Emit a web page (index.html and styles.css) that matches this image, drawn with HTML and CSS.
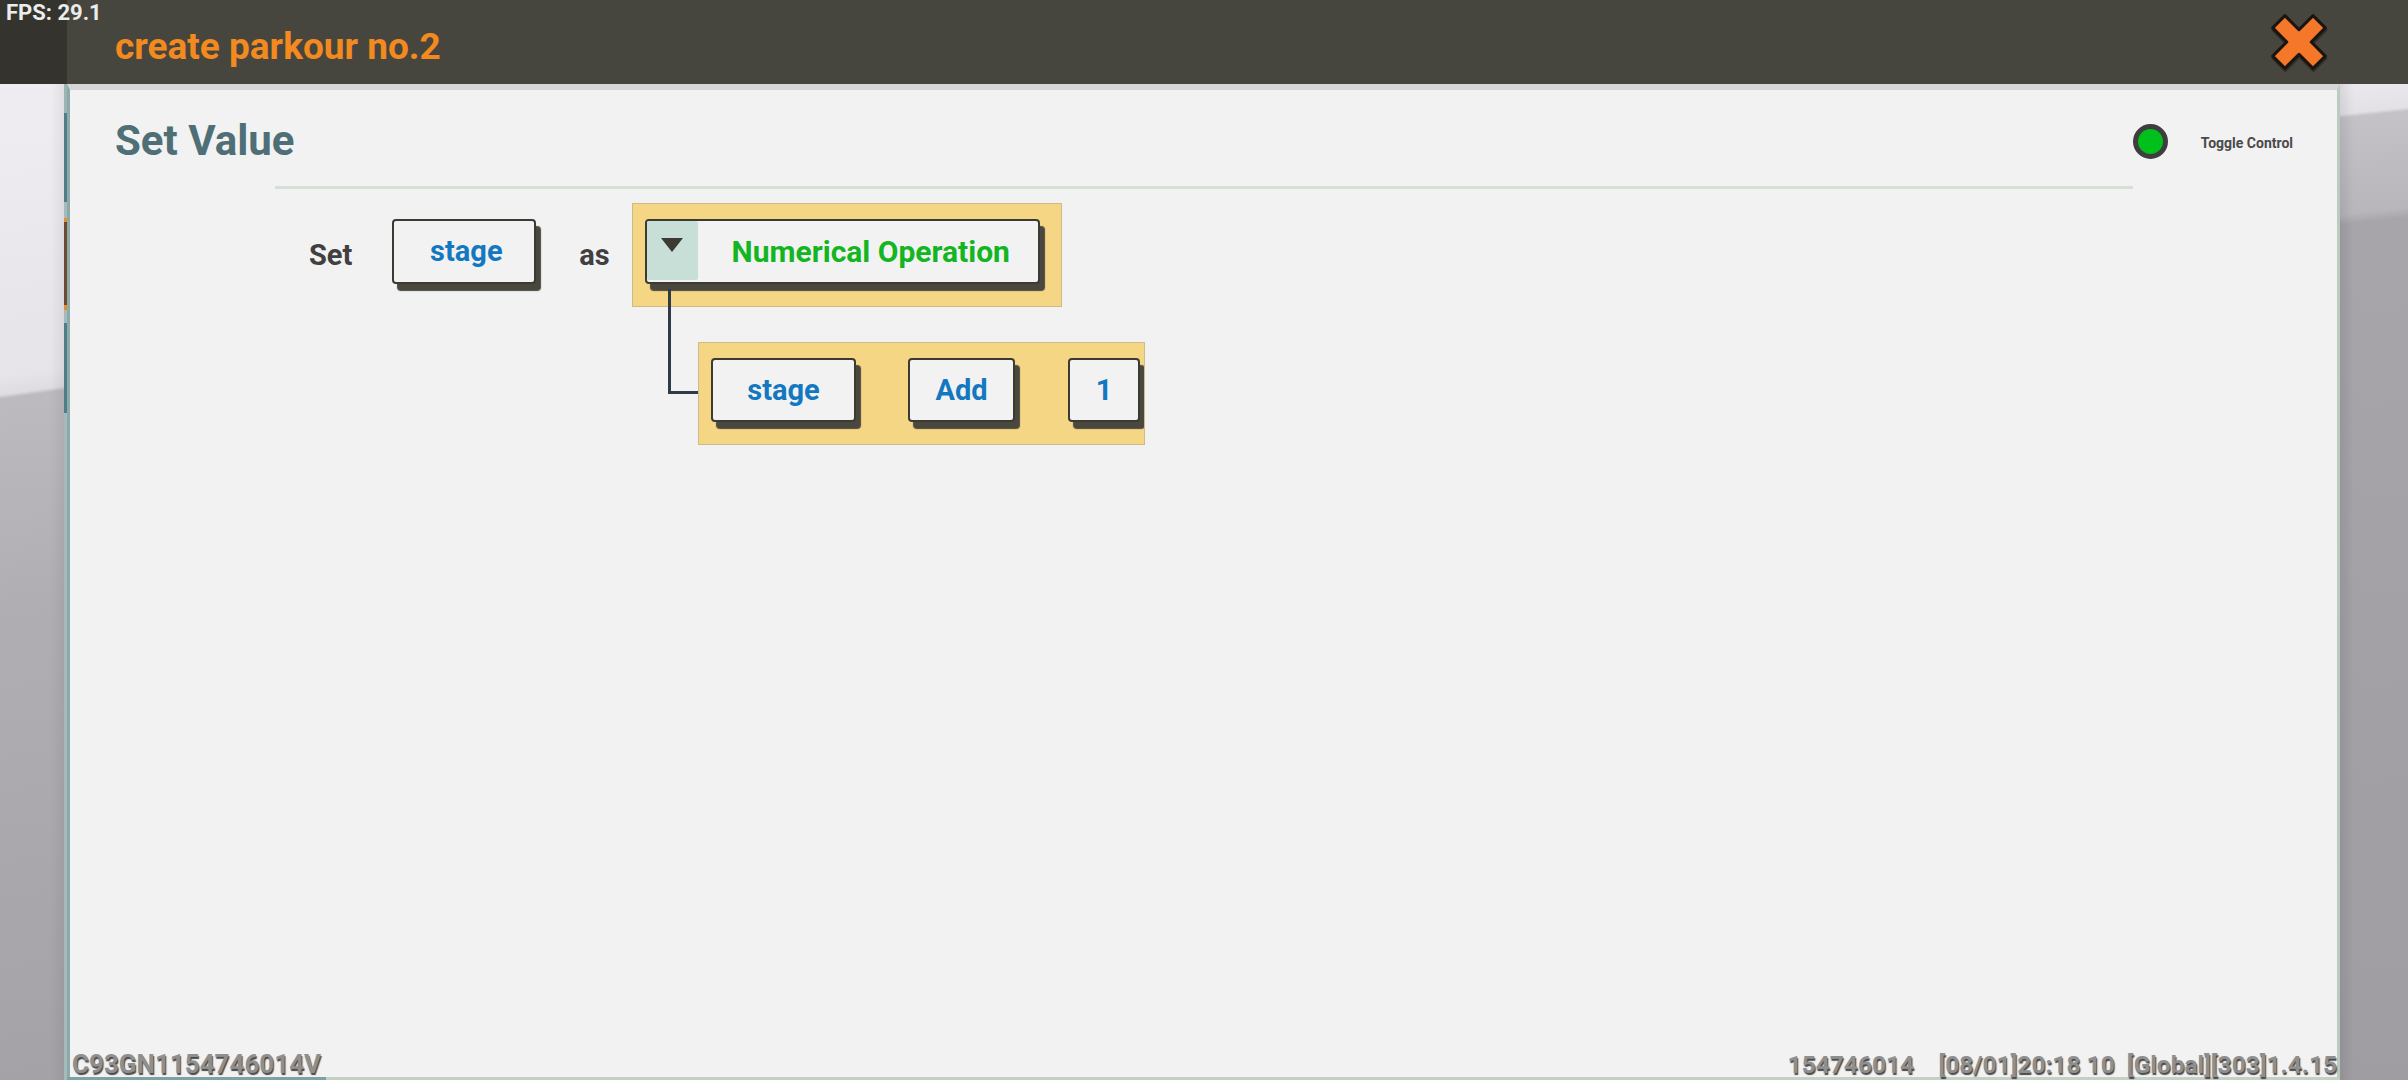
FILE: index.html
```html
<!DOCTYPE html>
<html lang="en">
<head>
<meta charset="utf-8">
<title>create parkour no.2</title>
<link rel="stylesheet" href="styles.css">
</head>
<body>
<div class="screen">
  <div class="fps">FPS: 29.1</div>
  <header class="topbar">
    <h1 class="title">create parkour no.2</h1>
    <button class="close" aria-label="Close">
      <svg viewBox="0 0 100 100" width="62" height="62">
        <g transform="rotate(45 50 50)">
          <polygon class="x-shadow" transform="translate(3 2)" points="64,4 64,36 96,36 96,64 64,64 64,96 36,96 36,64 4,64 4,36 36,36 36,4"/>
          <polygon class="x-shape" points="64,4 64,36 96,36 96,64 64,64 64,96 36,96 36,64 4,64 4,36 36,36 36,4"/>
        </g>
      </svg>
    </button>
  </header>
  <div class="stage-area">
    <div class="scene scene-left"></div>
    <main class="panel">
      <div class="panel-head">
        <h2 class="panel-title">Set Value</h2>
        <div class="toggle">
          <span class="toggle-dot"></span>
          <span class="toggle-label">Toggle Control</span>
        </div>
      </div>
      <hr class="divider">
      <div class="row row-set">
        <span class="label label-set">Set</span>
        <div class="chip chip-var">stage</div>
        <span class="label label-as">as</span>
        <div class="slot slot-op">
          <div class="chip chip-select">
            <span class="select-caret">
              <svg viewBox="0 0 22 14" width="22" height="14"><polygon points="0,0 22,0 11,14"/></svg>
            </span>
            <span class="select-text">Numerical Operation</span>
          </div>
        </div>
      </div>
      <div class="row row-sub">
        <div class="connector"></div>
        <div class="slot slot-expr">
          <div class="chip chip-var2">stage</div>
          <div class="chip chip-op">Add</div>
          <div class="chip chip-num">1</div>
        </div>
      </div>
      <div class="panel-foot">
        <span class="foot-left">C93GN1154746014V</span>
        <span class="foot-right">154746014    [08/01]20:18 10  [Global][303]1.4.15</span>
      </div>
    </main>
    <div class="scene scene-right"></div>
  </div>
</div>
</body>
</html>
```

FILE: styles.css
```css
html, body {
  margin: 0;
  padding: 0;
  background: #47463e;
}

.screen {
  position: relative;
  width: 2408px;
  height: 1080px;
  overflow: hidden;
  display: flex;
  flex-direction: column;
  font-family: Roboto, "Noto Sans", "Liberation Sans", sans-serif;
}

/* ---------- top bar ---------- */
.fps {
  position: absolute;
  top: 1px;
  left: 6px;
  font-size: 22px;
  line-height: 24px;
  font-weight: 700;
  color: #ececec;
  z-index: 2;
}

.topbar {
  flex: none;
  height: 84px;
  box-sizing: border-box;
  display: flex;
  align-items: center;
  padding-left: 115px;
  padding-right: 78px;
  background: linear-gradient(to right, #34332d 0 67px, #47463e 67px);
}

.title {
  flex: 1;
  margin: 0;
  padding-top: 8px;
  font-size: 37px;
  line-height: 1;
  font-weight: 700;
  color: #f28a1f;
}

.close {
  width: 62px;
  height: 62px;
  padding: 0;
  border: 0;
  background: none;
  display: block;
}

.close svg {
  display: block;
}

.x-shape {
  fill: #f5782a;
  stroke: #1b1510;
  stroke-width: 5;
  stroke-linejoin: round;
}

.x-shadow {
  fill: #24211b;
  stroke: #24211b;
  stroke-width: 5;
  stroke-linejoin: round;
  opacity: 0.6;
}

/* ---------- scene ---------- */
.stage-area {
  flex: 1;
  display: flex;
  min-height: 0;
}

.scene {
  flex: none;
}

.scene-left {
  width: 67px;
  background:
    linear-gradient(to bottom,
      #9db4b4 0 29px,
      #4f7e89 29px 118px,
      #a5baba 118px 134px,
      #e48f2e 134px 138px,
      #6d4a31 138px 221px,
      #e48f2e 221px 226px,
      #a5baba 226px 239px,
      #4f7e89 239px 329px,
      #a5baba 329px) right top / 3px 100% no-repeat,
    linear-gradient(to right, rgba(0,0,0,0) 50px, rgba(0,0,0,0.06) 64px),
    linear-gradient(172deg,
      #efedf1 0,
      #e6e4e8 290px,
      #dedce0 308px,
      #bcbabe 312px,
      #b0aeb2 520px,
      #a4a2a6 100%);
}

.scene-right {
  width: 68px;
  background:
    linear-gradient(to right, rgba(0,0,0,0.08) 0, rgba(0,0,0,0) 14px),
    linear-gradient(174deg,
      #ebe9ed 0,
      #e3e1e5 30px,
      #c4c2c6 34px,
      #b8b6ba 130px,
      #a7a5a9 140px,
      #9f9da1 100%);
}

/* ---------- panel ---------- */
.panel {
  position: relative;
  flex: none;
  width: 2273px;
  box-sizing: border-box;
  background: #f2f2f2;
  border-left: 3px solid #8caaaa;
  border-right: 3px solid #bccbbf;
  border-top: 6px solid #d6d6d6;
  border-bottom: 3px solid #c4d0c4;
  padding: 27px 44px 0 45px;
}

.panel::after {
  content: "";
  position: absolute;
  left: -3px;
  bottom: -3px;
  width: 259px;
  height: 3px;
  background: #7ea2a3;
}

.panel-head {
  display: flex;
  align-items: center;
  height: 48px;
}

.panel-title {
  margin: 0;
  font-size: 42px;
  line-height: 48px;
  font-weight: 700;
  color: #4f6f76;
}

.toggle {
  margin-left: auto;
  display: flex;
  align-items: center;
}

.toggle-dot {
  width: 35px;
  height: 35px;
  box-sizing: border-box;
  border-radius: 50%;
  border: 5px solid #3e3e3e;
  background: #00c11c;
}

.toggle-label {
  margin-left: 33px;
  padding-top: 3px;
  font-size: 14px;
  font-weight: 700;
  color: #4a4a4a;
}

.divider {
  margin: 21px 0 0 160px;
  width: 1858px;
  height: 3px;
  border: 0;
  background: #d5e1d7;
}

/* ---------- rows ---------- */
.row {
  display: flex;
}

.row-set {
  margin: 14px 0 0 194px;
  align-items: center;
}

.label {
  font-size: 29px;
  font-weight: 700;
  color: #404040;
}

.label-as {
  margin-left: 43px;
}

.chip {
  flex: none;
  height: 65px;
  box-sizing: border-box;
  display: flex;
  align-items: center;
  justify-content: center;
  border: 2px solid #3b3a33;
  border-radius: 4px;
  background: #f2f2f2;
  box-shadow: 5px 7px 1px #4a473e;
  font-size: 29px;
  font-weight: 700;
  color: #1478c0;
}

.chip-var {
  width: 144px;
  margin-left: 40px;
  margin-bottom: 8px;
  padding-left: 4px;
}

.slot {
  flex: none;
  box-sizing: border-box;
  background: #f5d685;
  border: 1px solid #cdbb88;
}

.slot-op {
  margin-left: 22px;
  width: 430px;
  height: 104px;
  padding: 15px 0 0 12px;
}

.chip-select {
  width: 395px;
  justify-content: flex-start;
  align-items: stretch;
}

.select-caret {
  flex: none;
  width: 51px;
  margin-bottom: 2px;
  border-radius: 2px;
  background: #c8dfd8;
  display: flex;
  justify-content: center;
  align-items: flex-start;
  padding-top: 17px;
  box-sizing: border-box;
}

.select-caret svg {
  display: block;
  fill: #3b3a33;
}

.select-text {
  flex: 1;
  align-self: center;
  text-align: center;
  font-size: 30px;
  font-weight: 700;
  color: #13b522;
  padding-left: 6px;
}

.row-sub {
  margin: 35px 0 0 553px;
  align-items: flex-start;
}

.connector {
  flex: none;
  width: 30px;
  height: 105px;
  margin-top: -53px;
  box-sizing: border-box;
  border-left: 3px solid #2f3b46;
  border-bottom: 3px solid #2f3b46;
}

.slot-expr {
  width: 447px;
  height: 103px;
  padding: 15px 0 0 12px;
  display: flex;
  align-items: flex-start;
  overflow: hidden;
}

.slot-expr .chip {
  height: 64px;
}

.chip-var2 {
  width: 145px;
}

.chip-op {
  width: 107px;
  margin-left: 52px;
}

.chip-num {
  width: 72px;
  margin-left: 53px;
}

/* ---------- footer watermark ---------- */
.panel-foot {
  position: absolute;
  left: 2px;
  right: 0;
  bottom: 0;
  display: flex;
  justify-content: space-between;
  align-items: flex-end;
  line-height: 25px;
  font-weight: 700;
  color: #8f8f8f;
  text-shadow: 1px 2px 1px #4a4a4a;
  white-space: pre;
}

.foot-left {
  font-size: 26px;
}

.foot-right {
  font-size: 24.5px;
}
```
